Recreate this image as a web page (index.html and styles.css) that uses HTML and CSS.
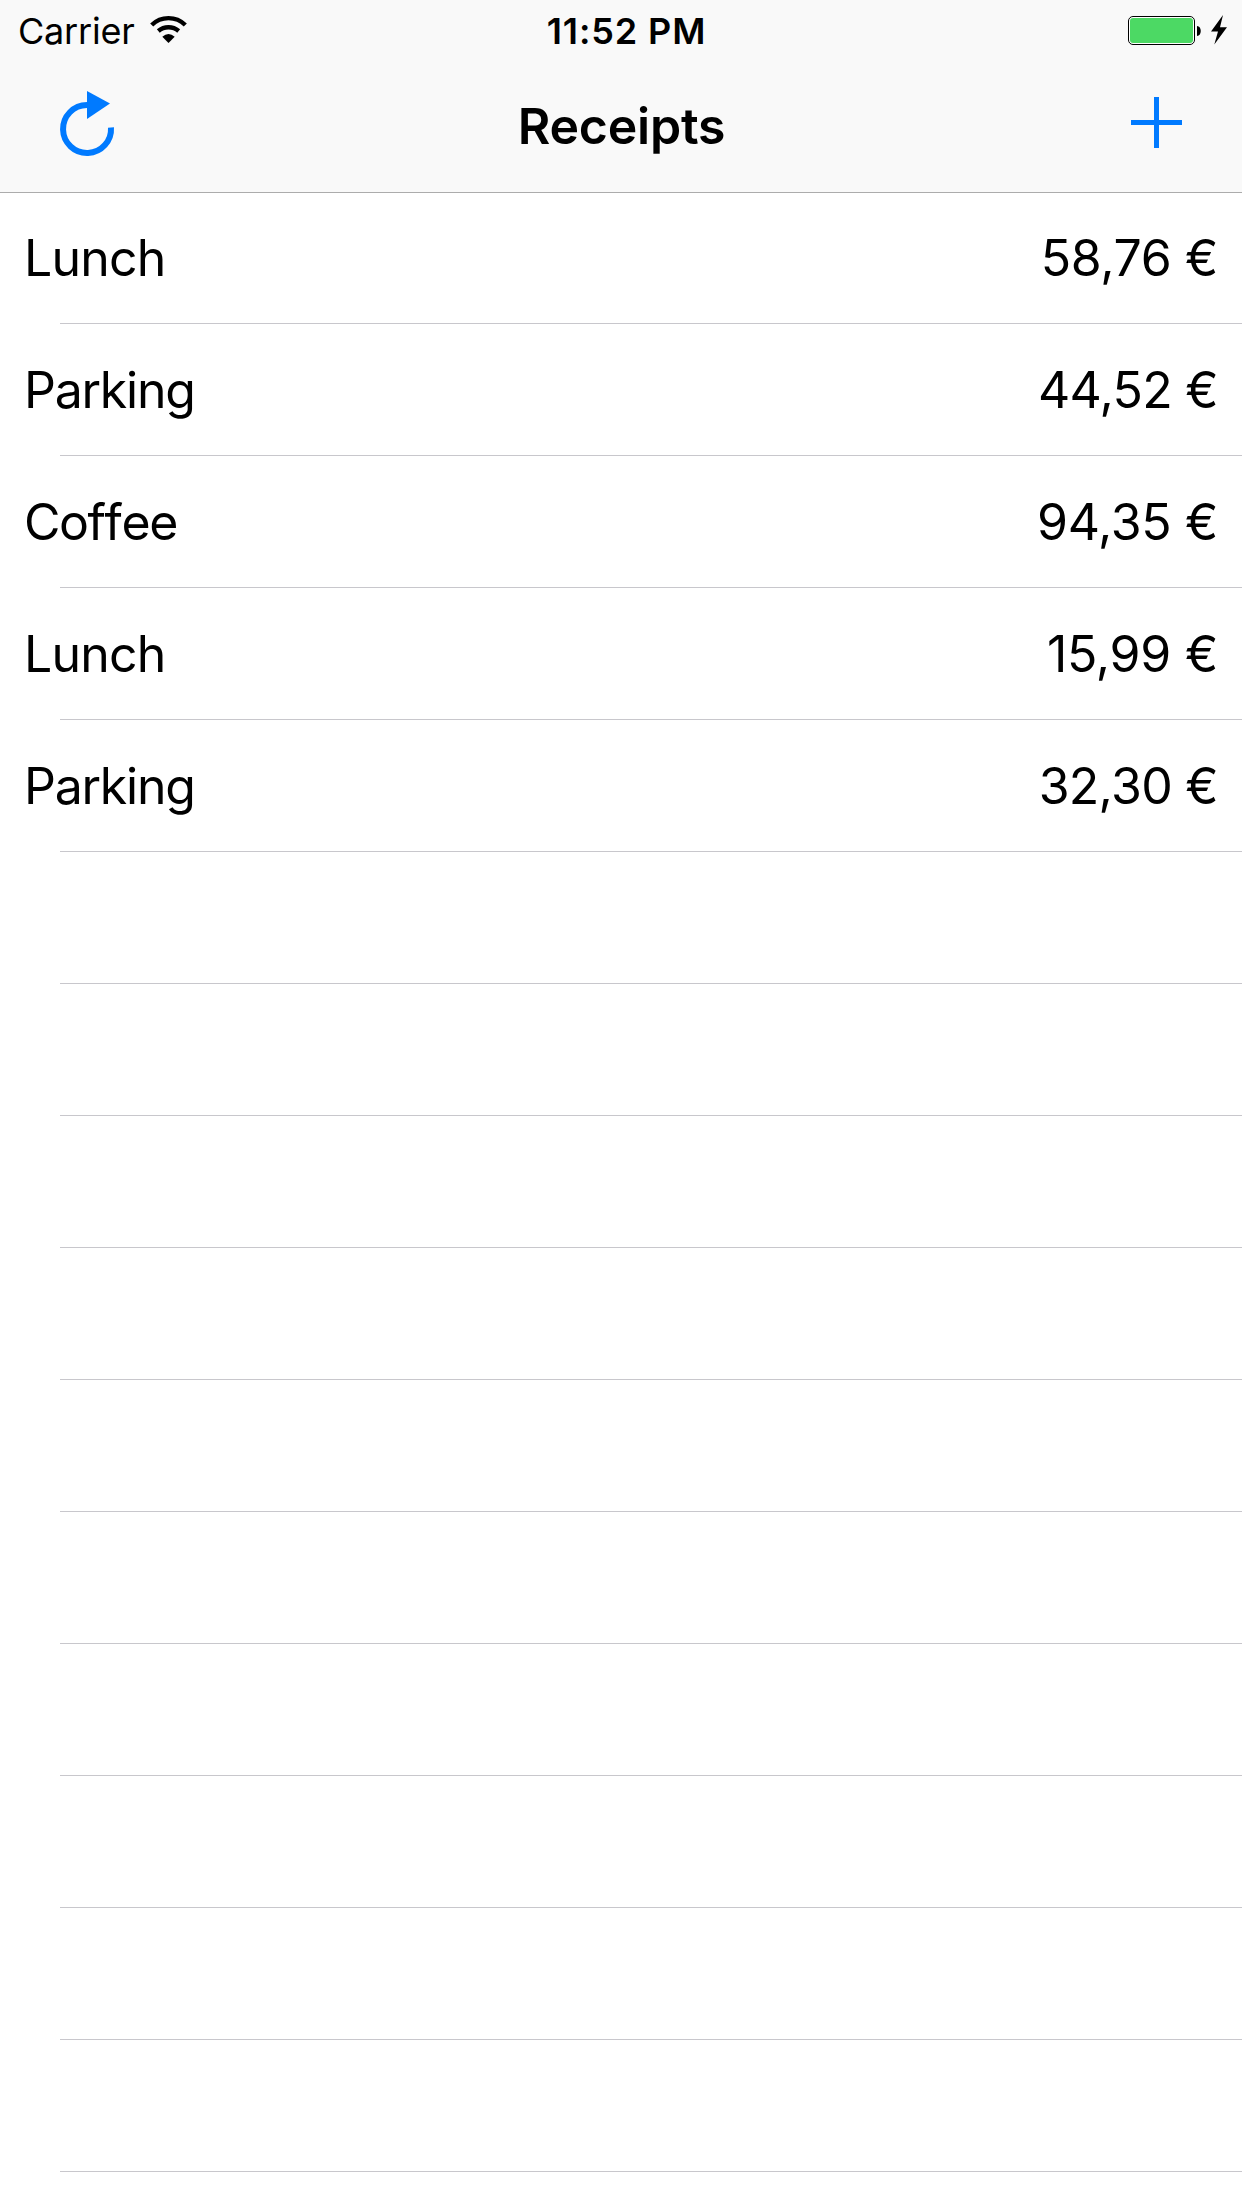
FILE: index.html
```html
<!DOCTYPE html>
<html lang="en">
<head>
<meta charset="utf-8">
<title>Receipts</title>
<link rel="stylesheet" href="styles.css">
</head>
<body>
<header class="header">
  <div class="status">
    <div class="status-left">
      <span class="carrier">Carrier</span>
      <svg class="wifi" width="38" height="29" viewBox="0 0 38 29">
        <path d="M1.700 10A24 24 0 0 1 35.300 10" fill="none" stroke="#000" stroke-width="4.400"/>
        <path d="M8.300 16A15.800 15.800 0 0 1 28.700 16" fill="none" stroke="#000" stroke-width="4.400"/>
        <path d="M12.300 21.700Q18.500 16.300 24.700 21.700L18.500 28Z"/>
      </svg>
    </div>
    <span class="time">11:52 PM</span>
    <div class="status-right">
      <svg width="102" height="32" viewBox="0 0 102 32">
        <rect x="1.500" y="2.500" width="66" height="28" rx="4.500" fill="#fff" stroke="#000"/>
        <rect x="3" y="4" width="63" height="25" rx="3" fill="#4cd964"/>
        <path d="M70 12c5 0 5 10 0 10z"/>
        <path d="M96 1L84 17.500h7L87.300 30.500L100 13.300h-7z"/>
      </svg>
    </div>
  </div>
  <nav class="nav">
    <svg class="refresh" width="56" height="68" viewBox="0 0 56 68">
      <path d="M28 15A24 24 0 1 0 52 37.500" fill="none" stroke="#007aff" stroke-width="6"/>
      <path d="M28 1L51 13.500L28 29Z" fill="#007aff"/>
    </svg>
    <h1 class="title">Receipts</h1>
    <svg class="add" width="51" height="51" viewBox="0 0 51 51">
      <path d="M0 25.500H51M25.500 0V51" stroke="#007aff" stroke-width="5"/>
    </svg>
  </nav>
</header>
<ul class="list">
  <li class="row"><span class="lunch">Lunch</span><span class="amount">58,76 €</span></li>
  <li class="row"><span class="parking">Parking</span><span class="amount tight">44,52 €</span></li>
  <li class="row"><span class="coffee">Coffee</span><span class="amount">94,35 €</span></li>
  <li class="row"><span class="lunch">Lunch</span><span class="amount loose">15,99 €</span></li>
  <li class="row"><span class="parking">Parking</span><span class="amount tight">32,30 €</span></li>
  <li class="row"></li>
  <li class="row"></li>
  <li class="row"></li>
  <li class="row"></li>
  <li class="row"></li>
  <li class="row"></li>
  <li class="row"></li>
  <li class="row"></li>
  <li class="row"></li>
  <li class="row"></li>
</ul>
</body>
</html>
```
FILE: styles.css
```css
* { box-sizing: border-box; }
body {
  margin: 0;
  height: 2208px;
  overflow: hidden;
  background: #fff;
  color: #000;
  font-family: Inter, "Liberation Sans", sans-serif;
  font-size: 50px;
}
svg { display: block; }
.header {
  height: 193px;
  background: #f9f9f9;
  border-bottom: 1px solid #acacac;
}
.status, .nav {
  display: grid;
  grid-template-columns: 1fr auto 1fr;
}
.status {
  height: 60px;
  padding: 0 13px 0 18px;
  font-size: 36px;
  line-height: 62px;
}
.status-left { display: flex; }
.carrier {
  width: 132px;
  letter-spacing: -0.2px;
}
.wifi { margin-top: 15px; }
.time {
  padding-left: 6px;
  font-weight: 560;
  letter-spacing: 0.9px;
}
.status-right {
  justify-self: end;
  padding-top: 14px;
}
.nav {
  height: 132px;
  padding: 0 60px 0 59px;
}
.refresh { margin-top: 30px; }
.title {
  margin: 0;
  padding-left: 2px;
  font-size: 50px;
  font-weight: 600;
  line-height: 132px;
  letter-spacing: -0.2px;
}
.add {
  justify-self: end;
  margin-top: 37px;
}
.list {
  margin: 0;
  padding: 0;
  list-style: none;
}
.row {
  display: flex;
  justify-content: space-between;
  height: 132px;
  padding: 0 24px;
  line-height: 132px;
  background: linear-gradient(#c8c7cc, #c8c7cc) 60px 100% / 100% 1px no-repeat;
}
.row:first-child {
  height: 131px;
  line-height: 131px;
}
.lunch { letter-spacing: -0.8px; }
.parking { letter-spacing: -1.25px; }
.coffee {
  letter-spacing: -1.5px;
  font-feature-settings: "calt" 0, "liga" 0;
  font-kerning: none;
}
.amount { letter-spacing: -0.35px; }
.tight { letter-spacing: -0.7px; }
.loose { letter-spacing: -0.25px; }
```
